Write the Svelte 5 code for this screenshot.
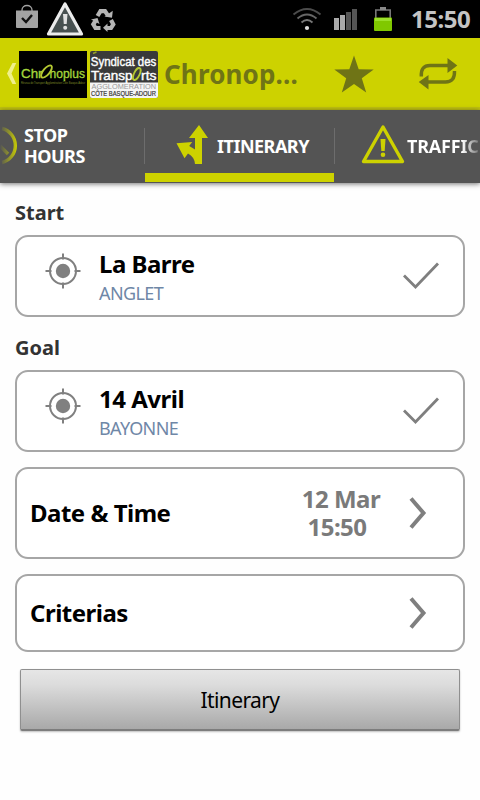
<script lang="ts">
  type Stop = { label: string; name: string; city: string };

  const stops: Stop[] = [
    { label: 'Start', name: 'La Barre', city: 'ANGLET' },
    { label: 'Goal', name: '14 Avril', city: 'BAYONNE' }
  ];

  let date = $state('12 Mar');
  let time = $state('15:50');
  let activeTab = $state('itinerary');
</script>

<div class="screen">
  <div class="status-bar">
    <svg class="notifications" width="130" height="38" viewBox="0 0 130 38">
      <!-- market bag -->
      <path d="M22 12V10a5 4.500 0 0 1 10 0v2" fill="none" stroke="#a3a3a3" stroke-width="1.300" />
      <path d="M16 10.500h22v16.500q0 1-1 1H17q-1 0-1-1z" fill="#a3a3a3" />
      <path d="M22 18l4 4 6-7" fill="none" stroke="#111" stroke-width="2.400" />
      <!-- warning -->
      <path d="M65 4L81.500 34H48.500z" fill="#475050" stroke="#ececec" stroke-width="3.200" stroke-linejoin="round" />
      <path d="M63 14h4.500l-.8 10h-2.900z" fill="#e0e0e0" />
      <circle cx="65.200" cy="27.700" r="2" fill="#e0e0e0" />
      <!-- recycle -->
      <g fill="none" stroke="#b5b5b5" stroke-width="4.200">
        <path d="M97.500 16l3-4.800h4.500l3 4.500" />
        <path d="M111 20l2.300 4.300-2.300 3.700H106" />
        <path d="M100.500 28h-5l-2.200-3.700 2.500-4" />
      </g>
      <g fill="#b5b5b5">
        <path d="M104.500 16.500l7.500 1.300.8-7z" />
        <path d="M107.500 23.500v8.500l-4.500-4.200z" />
        <path d="M91 19.500l6.500-1.500 2 6z" />
      </g>
    </svg>
    <svg class="system" width="110" height="38" viewBox="290 0 110 38">
      <g fill="none" stroke="#4c4c4c" stroke-width="1.900">
        <path d="M293.500 14.500q13.500-11 27 0" />
        <path d="M297.500 18.500q9.500-8 19 0" stroke="#666" />
        <path d="M301.500 22.500q5.500-5 11 0" stroke="#777" />
      </g>
      <circle cx="307" cy="28" r="2.100" fill="#ddd" />
      <rect x="334" y="18" width="5" height="12" fill="#aaa" />
      <rect x="340" y="15" width="5" height="15" fill="#aaa" />
      <rect x="346" y="12" width="5" height="18" fill="#555" />
      <rect x="352" y="9" width="5" height="21" fill="#555" />
      <path d="M375.800 18V10h14.400v8" fill="none" stroke="#777" stroke-width="1.600" />
      <rect x="380" y="7" width="6" height="3" fill="#888" />
      <rect x="374" y="17.500" width="18" height="13.500" rx="1" fill="#80c800" />
      <rect x="375" y="18" width="16" height="3" fill="#9be02a" />
    </svg>
    <span class="clock">{time}</span>
  </div>

  <header class="action-bar">
    <svg class="brand" width="160" height="70" viewBox="0 38 160 70">
      <path d="M12.500 63h3.700L11.500 73.500 16.200 84h-3.700L7 73.500z" fill="#f0f08a" />
      <rect x="19" y="51" width="68" height="47" fill="#000" />
      <g fill="#a5d63c" stroke="#a5d63c" stroke-width="0.300">
        <text x="21" y="78" font-size="12" textLength="21.500" lengthAdjust="spacingAndGlyphs">Chr</text>
        <text x="49.500" y="78" font-size="12" textLength="35.500" lengthAdjust="spacingAndGlyphs">noplus</text>
      </g>
      <ellipse cx="46.500" cy="71.500" rx="3.200" ry="7.500" transform="rotate(40 46.500 71.500)" fill="none" stroke="#b4c832" stroke-width="1.900" />
      <text x="21" y="83.500" font-size="3" textLength="64" lengthAdjust="spacingAndGlyphs" fill="#7f8c27">Réseau de Transport Agglomération Côte Basque-Adour</text>
      <rect x="90" y="51" width="68" height="47" rx="2" fill="#3a3a3a" />
      <path d="M90 82.500h68V96q0 2-2 2H92q-2 0-2-2z" fill="#f5f5f5" />
      <path d="M93 53.500l3.500-1.500" stroke="#96a02c" stroke-width="1.500" />
      <g fill="#fff" stroke="#fff" stroke-width="0.400">
        <text x="90.800" y="66" font-size="13" textLength="65.500" lengthAdjust="spacingAndGlyphs">Syndicat des</text>
        <text x="91" y="79.500" font-size="13" textLength="41.500" lengthAdjust="spacingAndGlyphs">Transp</text>
        <text x="141" y="79.500" font-size="13" textLength="15.500" lengthAdjust="spacingAndGlyphs">rts</text>
      </g>
      <ellipse cx="136.800" cy="74" rx="2.800" ry="6.500" transform="rotate(26 136.800 74)" fill="none" stroke="#b4c832" stroke-width="1.800" />
      <text x="91.500" y="88.800" font-size="6.500" textLength="64.500" lengthAdjust="spacingAndGlyphs" fill="#999">AGGLOMERATION</text>
      <text x="91" y="96" font-size="7" textLength="65" lengthAdjust="spacingAndGlyphs" fill="#333" stroke="#333" stroke-width="0.200">CÔTE BASQUE-ADOUR</text>
    </svg>
    <h1 class="title">Chronop...</h1>
    <svg class="actions" width="150" height="70" viewBox="330 38 150 70">
      <path d="M354 55.500l4.700 13.700 15 .2-11.900 8.900 4.400 14.200L354 84l-12.200 8.500 4.400-14.200-11.900-8.900 15-.2z" fill="#6f7416" />
      <g fill="none" stroke="#6f7416" stroke-width="3.400">
        <path d="M421.300 76.500Q420.500 65.500 430 65.500H448" />
        <path d="M454.500 71Q455 82 445.500 82H428" />
      </g>
      <path d="M447.500 58l9.800 7.500-9.800 7.500zM428.500 75v14.500l-9.800-7.500z" fill="#6f7416" />
    </svg>
  </header>

  <nav class="tabs">
    <button class="tab hours" class:active={activeTab === 'hours'} onclick={() => activeTab = 'hours'}>
      <svg width="22" height="44" viewBox="0 124 22 44">
        <defs>
          <linearGradient id="fade" x1="0" x2="18" y1="0" y2="0" gradientUnits="userSpaceOnUse">
            <stop offset="0" stop-color="#cdd200" stop-opacity="0" />
            <stop offset="1" stop-color="#cdd200" />
          </linearGradient>
        </defs>
        <path d="M2 128.500A17.500 17.500 0 0 1 2 162.500M0 146l8 8" fill="none" stroke="url(#fade)" stroke-width="3.400" />
      </svg>
      <span>STOP<br />HOURS</span>
    </button>
    <button class="tab itinerary" class:active={activeTab === 'itinerary'} onclick={() => activeTab = 'itinerary'}>
      <svg width="34" height="44" viewBox="175 124 34 44">
        <path d="M199 125l9 13h-6v26h-7q-.5-7-7-10.500l-3.500 4.700-8-15 15.700-1.200-3 4 5.800 3.500V138h-6z" fill="#cdd200" />
      </svg>
      <span>ITINERARY</span>
    </button>
    <button class="tab traffic" class:active={activeTab === 'traffic'} onclick={() => activeTab = 'traffic'}>
      <svg width="46" height="44" viewBox="360 124 46 44">
        <path d="M383 127L402.500 161.500H363.500z" fill="none" stroke="#cdd200" stroke-width="3.400" stroke-linejoin="round" />
        <path d="M380.500 139h5l-.8 12h-3.400z" fill="#cdd200" />
        <circle cx="383" cy="154.800" r="2.300" fill="#cdd200" />
      </svg>
      <span>TRAFFIC</span>
    </button>
  </nav>

  <main class="content">
    {#each stops as stop}
      <h2 class="label">{stop.label}</h2>
      <section class="card stop">
        <svg class="target" width="36" height="36" viewBox="0 0 36 36">
          <circle cx="18" cy="18" r="13" fill="none" stroke="#808080" stroke-width="2" />
          <circle cx="18" cy="18" r="7.200" fill="#808080" />
          <path d="M18 0.500v6M18 29.500v6M0.500 18h6M29.500 18h6" stroke="#808080" stroke-width="2" />
        </svg>
        <div class="place">
          <span class="name">{stop.name}</span>
          <span class="city">{stop.city}</span>
        </div>
        <svg class="check" width="38" height="28" viewBox="0 0 38 28">
          <path d="M2 13.500L13.500 25L36 1.500" fill="none" stroke="#7f7f7f" stroke-width="2.800" />
        </svg>
      </section>
    {/each}

    <section class="card row date">
      <span class="name">Date &amp; Time</span>
      <div class="when">
        <span>{date}</span>
        <span class="time">{time}</span>
      </div>
      {@render chevron()}
    </section>

    <section class="card row criterias">
      <span class="name">Criterias</span>
      {@render chevron()}
    </section>

    <button class="submit">Itinerary</button>
  </main>
</div>

{#snippet chevron()}
  <svg class="chevron" width="18" height="32" viewBox="0 0 18 32">
    <path d="M2 1.500L14.500 16L2 30.500" fill="none" stroke="#7f7f7f" stroke-width="4" />
  </svg>
{/snippet}

<style>
  :global(body) {
    margin: 0;
    background: #fefefe;
  }

  .screen {
    width: 480px;
    height: 800px;
    overflow: hidden;
    background: #fefefe;
    font-family: 'Noto Sans', 'Open Sans', sans-serif;
    color: #000;
  }

  svg {
    display: block;
    flex: none;
  }

  .status-bar {
    display: flex;
    align-items: center;
    height: 38px;
    background: #000;
  }

  .system {
    margin-left: 160px;
  }

  .clock {
    margin-left: 11px;
    font-size: 24px;
    font-weight: 700;
    line-height: 32px;
    letter-spacing: -0.5px;
    color: #c4c4c4;
  }

  .action-bar {
    display: flex;
    align-items: center;
    box-sizing: border-box;
    height: 72px;
    background: #cdd200;
    border-bottom: 3px solid #bfc112;
  }

  .brand {
    font-family: 'Liberation Sans', Arial, sans-serif;
  }

  .title {
    flex: 1;
    margin: 2px 0 0 4px;
    font-size: 26px;
    font-weight: 700;
    line-height: 36px;
    letter-spacing: 0.15px;
    white-space: nowrap;
    color: #6f7416;
  }

  .tabs {
    display: flex;
    height: 73px;
    background: #545454;
    box-shadow: 0 1px 5px rgba(0, 0, 0, 0.55);
  }

  .tab {
    display: flex;
    align-items: center;
    flex: none;
    box-sizing: border-box;
    height: 72px;
    padding: 9px 0 0;
    border: 0;
    border-bottom: 9px solid transparent;
    background: linear-gradient(#6d6d6d, #6d6d6d) right 18px / 1px 36px no-repeat;
    font: 700 18px/21px 'Noto Sans', 'Open Sans', sans-serif;
    letter-spacing: -0.5px;
    text-align: left;
    color: #fff;
  }

  .tab.active {
    border-bottom-color: #cdd200;
  }

  .hours {
    width: 145px;
    gap: 2px;
  }

  .itinerary {
    width: 189px;
    padding-left: 30px;
    gap: 8px;
    background: none;
  }

  .traffic {
    width: 146px;
    padding-left: 26px;
    gap: 1px;
    overflow: hidden;
    background-position: left 18px;
  }

  .traffic span {
    background: linear-gradient(90deg, #fff 55px, #666 74px);
    background-clip: text;
    letter-spacing: -0.2px;
    color: transparent;
  }

  .content {
    display: flex;
    flex-direction: column;
    padding: 17px 15px 0;
  }

  .label {
    margin: 0;
    height: 35px;
    font-size: 20px;
    font-weight: 700;
    line-height: 25px;
    color: #333;
  }

  .card {
    display: flex;
    box-sizing: border-box;
    border: 2px solid #a6a6a6;
    border-radius: 13px;
    background: #fff;
  }

  .stop {
    height: 82px;
    margin-bottom: 18px;
    padding: 0 23px 0 28px;
  }

  .stop + .date {
    margin-top: -3px;
  }

  .target {
    margin-top: 16px;
  }

  .place {
    display: flex;
    flex-direction: column;
    flex: 1;
    padding: 11px 0 0 18px;
  }

  .name {
    font-size: 24px;
    font-weight: 700;
    line-height: 32px;
    letter-spacing: -0.5px;
  }

  .city {
    padding-top: 1px;
    font-size: 18px;
    line-height: 25px;
    letter-spacing: -0.6px;
    color: #6f87a7;
  }

  .check {
    margin-top: 25px;
  }

  .row {
    align-items: center;
    padding: 0 36px 0 13px;
  }

  .row .name {
    flex: 1;
    padding-bottom: 1px;
  }

  .date {
    height: 92px;
  }

  .when {
    display: flex;
    flex-direction: column;
    align-items: center;
    width: 78px;
    margin-right: 29px;
    font-size: 24px;
    font-weight: 700;
    line-height: 28px;
    letter-spacing: -0.5px;
    white-space: nowrap;
    color: #7a7a7a;
  }

  .time {
    padding-right: 8px;
  }

  .criterias {
    height: 78px;
    margin-top: 15px;
  }

  .submit {
    height: 62px;
    margin: 17px 5px 0;
    border: 1px solid #8f8f8f;
    border-bottom: 2px solid #7d7d7d;
    border-radius: 2px;
    background: linear-gradient(#e6e6e6, #dcdcdc 25%, #a9a9a9);
    box-shadow: 0 1px 2px rgba(0, 0, 0, 0.25);
    font: 400 21px/30px 'Noto Sans', 'Open Sans', sans-serif;
    letter-spacing: -0.6px;
    color: #000;
  }
</style>
